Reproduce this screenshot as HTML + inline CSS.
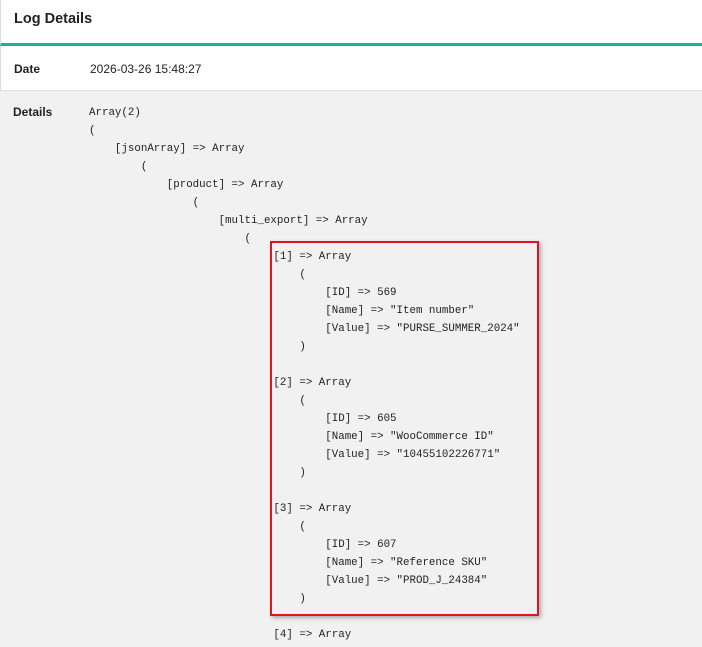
<!DOCTYPE html>
<html><head><style>
body{margin:0;width:702px;height:647px;overflow:hidden;background:#f1f1f1;font-family:"Liberation Sans",sans-serif;position:relative}
.hdr{position:absolute;left:0;top:0;width:702px;height:43px;background:#fff;border-bottom:3px solid #1fb394;border-left:1px solid #ddd;box-sizing:content-box}
.hdr h1{margin:0;position:absolute;left:13px;top:11px;font-size:14.5px;font-weight:bold;color:#222}
.date{position:absolute;left:0;top:46px;width:702px;height:44px;background:#fff;border-bottom:1px solid #ddd;border-left:1px solid #ddd}
.lbl{position:absolute;left:13px;font-size:12px;font-weight:bold;color:#222}
.val{position:absolute;left:89px;font-size:12px;color:#222}
pre{position:absolute;left:89px;top:104px;margin:0;font-family:"Liberation Mono",monospace;font-size:10.8px;line-height:18px;color:#222}
pre span{position:relative;left:3px}
.box{position:absolute;left:270px;top:241px;width:265px;height:371px;border:2px solid #e0141e;box-shadow:2px 2px 4px rgba(0,0,0,.3)}
</style></head><body>
<div class="hdr"><h1>Log Details</h1></div>
<div class="date"><div class="lbl" style="top:16px">Date</div><div class="val" style="top:16px">2026-03-26 15:48:27</div></div>
<div class="lbl" style="top:105px">Details</div>
<pre>Array(2)
(
    [jsonArray] =&gt; Array
        (
            [product] =&gt; Array
                (
                    [multi_export] =&gt; Array
                        (
<span>                            [1] =&gt; Array
                                (
                                    [ID] =&gt; 569
                                    [Name] =&gt; "Item number"
                                    [Value] =&gt; "PURSE_SUMMER_2024"
                                )

                            [2] =&gt; Array
                                (
                                    [ID] =&gt; 605
                                    [Name] =&gt; "WooCommerce ID"
                                    [Value] =&gt; "10455102226771"
                                )

                            [3] =&gt; Array
                                (
                                    [ID] =&gt; 607
                                    [Name] =&gt; "Reference SKU"
                                    [Value] =&gt; "PROD_J_24384"
                                )

                            [4] =&gt; Array</span></pre>
<div class="box"></div>
</body></html>
